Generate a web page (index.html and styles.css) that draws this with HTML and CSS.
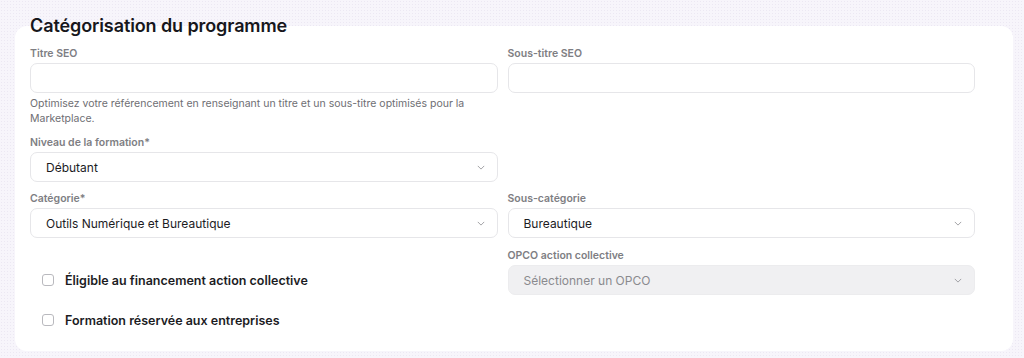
FILE: index.html
```html
<!DOCTYPE html>
<html lang="fr">
<head>
<meta charset="utf-8">
<title>Catégorisation du programme</title>
<link rel="stylesheet" href="styles.css">
</head>
<body>
<h1 class="title">Catégorisation du programme</h1>
<section class="card">
  <div class="grid">
    <div class="field">
      <label class="label">Titre SEO</label>
      <div class="input"></div>
      <p class="help">Optimisez votre référencement en renseignant un titre et un sous-titre optimisés pour la Marketplace.</p>
    </div>
    <div class="field">
      <label class="label">Sous-titre SEO</label>
      <div class="input"></div>
    </div>

    <div class="field">
      <label class="label">Niveau de la formation*</label>
      <div class="select"><span class="value">Débutant</span><svg class="chev" viewBox="0 0 10 6"><path d="M1 1l4 4 4-4"/></svg></div>
    </div>
    <div></div>

    <div class="field">
      <label class="label">Catégorie*</label>
      <div class="select"><span class="value">Outils Numérique et Bureautique</span><svg class="chev" viewBox="0 0 10 6"><path d="M1 1l4 4 4-4"/></svg></div>
    </div>
    <div class="field">
      <label class="label">Sous-catégorie</label>
      <div class="select"><span class="value">Bureautique</span><svg class="chev" viewBox="0 0 10 6"><path d="M1 1l4 4 4-4"/></svg></div>
    </div>

    <div class="check-row end">
      <span class="box"></span><span class="check-label">Éligible au financement action collective</span>
    </div>
    <div class="field opco">
      <label class="label">OPCO action collective</label>
      <div class="select disabled"><span class="value placeholder">Sélectionner un OPCO</span><svg class="chev" viewBox="0 0 10 6"><path d="M1 1l4 4 4-4"/></svg></div>
    </div>

    <div class="check-row">
      <span class="box"></span><span class="check-label">Formation réservée aux entreprises</span>
    </div>
  </div>
</section>
</body>
</html>
```

FILE: styles.css
```css
* { box-sizing: border-box; }
html, body { height: 100%; }
body {
  margin: 0;
  padding: 0 11px 0 15px;
  font-family: Inter, "Liberation Sans", sans-serif;
  color: #1c1c1f;
  background-color: #f7f5fb;
  background-image: radial-gradient(#ece8f3 0.7px, transparent 0.8px);
  background-size: 3px 3px;
}
.title {
  position: relative;
  z-index: 1;
  margin: 0 0 -12px;
  padding: 14px 0 0 15px;
  font-size: 18px;
  line-height: 24px;
  font-weight: 600;
  letter-spacing: -0.1px;
  color: #17171c;
}
.card {
  background: #fff;
  border-radius: 12px;
  padding: 21px 38px 16px 15px;
}
.grid {
  display: grid;
  grid-template-columns: 1fr 1fr;
  column-gap: 10px;
  row-gap: 10px;
}
.field { display: flex; flex-direction: column; }
.field.opco { margin-top: 1px; }
.label {
  font-size: 10.5px;
  line-height: 14px;
  font-weight: 600;
  color: #7e7e83;
  margin-bottom: 2px;
}
.input, .select {
  height: 30px;
  border: 1px solid #e6e6e9;
  border-radius: 7px;
  background: #fff;
}
.select {
  display: flex;
  align-items: center;
  justify-content: space-between;
  padding: 0 12px 0 15px;
}
.value { font-size: 12px; color: #1c1c1f; }
.placeholder { color: #8a8a8e; }
.select.disabled { background: #f0f0f2; border-color: #ececee; }
.chev { width: 8px; height: 5px; fill: none; stroke: #96969b; stroke-width: 1.1; }
.help {
  margin: 3px 0 0;
  font-size: 10.5px;
  line-height: 15px;
  color: #6e6e73;
  max-width: 470px;
}
.check-row {
  display: flex;
  align-items: center;
  height: 30px;
  padding-left: 12px;
  gap: 11px;
}
.check-row.end { align-self: end; }
.box {
  width: 12px;
  height: 12px;
  border: 1.3px solid #b9b9be;
  border-radius: 3px;
  background: #fff;
}
.check-label {
  font-size: 12.5px;
  font-weight: 600;
  color: #1c1c1f;
}
```
